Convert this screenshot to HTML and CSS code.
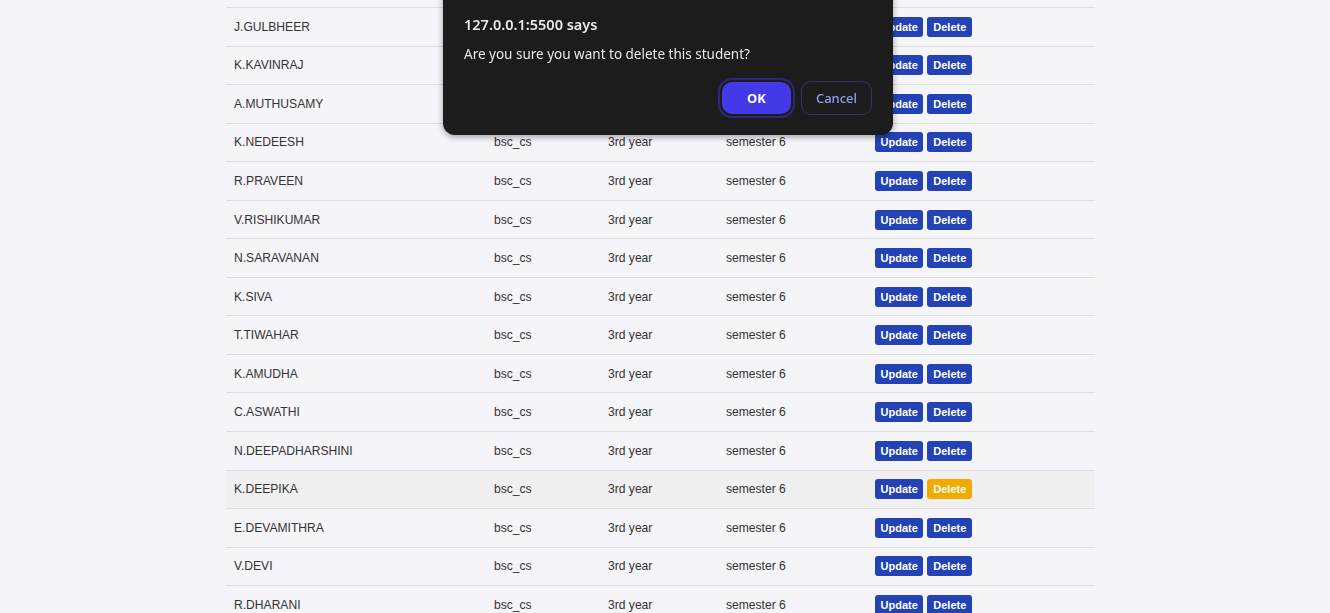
FILE: index.html
```html
<!DOCTYPE html>
<html>
<head>
<meta charset="utf-8">
<link rel="stylesheet" href="styles.css">
</head>
<body>
<div class="wrap">
<table class="students">
<tbody id="rows"></tbody>
</table>
</div>
<div class="dialog">
  <div class="dlg-title">127.0.0.1:5500 says</div>
  <div class="dlg-msg">Are you sure you want to delete this student?</div>
  <div class="dlg-actions">
    <button class="btn-ok">OK</button>
    <button class="btn-cancel">Cancel</button>
  </div>
</div>
<script>
const names=["J.GULBHEER","K.KAVINRAJ","A.MUTHUSAMY","K.NEDEESH","R.PRAVEEN","V.RISHIKUMAR","N.SARAVANAN","K.SIVA","T.TIWAHAR","K.AMUDHA","C.ASWATHI","N.DEEPADHARSHINI","K.DEEPIKA","E.DEVAMITHRA","V.DEVI","R.DHARANI"];
const tb=document.getElementById('rows');
names.forEach((n,i)=>{
  const tr=document.createElement('tr');
  if(n==="K.DEEPIKA") tr.className='hover';
  tr.innerHTML=`<td class="c1">${n}</td><td class="c2">bsc_cs</td><td class="c3">3rd year</td><td class="c4">semester 6</td><td class="c5"><button class="act">Update</button><button class="act del">Delete</button></td>`;
  tb.appendChild(tr);
});
</script>
</body>
</html>
```
FILE: styles.css
```css
html, body {
  margin: 0;
  padding: 0;
  background: #f4f4f9;
  height: 613px;
  overflow: hidden;
}
.wrap {
  padding-top: 7px;
  display: flex;
  justify-content: flex-start;
  padding-left: 226px;
}
.students {
  width: 869px;
  border-collapse: collapse;
  font-family: "Liberation Sans", Arial, sans-serif;
  font-size: 12.1px;
  color: #333;
}
.students tr {
  border-bottom: 1px solid #dddddd;
}
.students tr:first-child {
  border-top: 1px solid #dddddd;
}
.students tr.hover {
  background: #f0f0f0;
}
.students td {
  height: 38.55px;
  padding: 0 0 0 8px;
  box-sizing: border-box;
  vertical-align: middle;
}
.c1 { width: 260px; }
.c2 { width: 114px; }
.c3 { width: 118px; }
.c4 { width: 149px; }
.c5 { width: 228px; }
.act {
  font-family: "Liberation Sans", Arial, sans-serif;
  font-size: 11px;
  font-weight: bold;
  color: #fff;
  background: #2342b5;
  border: none;
  border-radius: 3px;
  height: 20px;
  padding: 0 5.5px;
  margin-right: 4px;
}
.act.del { padding: 0 6px; }
.hover .act.del { background: #f2a900; }
.dialog {
  position: fixed;
  left: 443px;
  top: -14px;
  width: 450px;
  height: 149px;
  box-sizing: border-box;
  background: #1c1c1c;
  border-radius: 12px;
  box-shadow: 0 2px 6px rgba(0,0,0,0.35);
  padding: 28px 21px 0 21px;
  font-family: "Noto Sans", "Open Sans", sans-serif;
  color: #e8e8e8;
}
.dlg-title {
  font-size: 14.5px;
  font-weight: 600;
  line-height: 20px;
}
.dlg-msg {
  font-size: 13.5px;
  line-height: 18px;
  margin-top: 11px;
}
.dlg-actions {
  display: flex;
  justify-content: flex-end;
  align-items: center;
  gap: 6px;
  margin-top: 17px;
}
.btn-ok {
  font-family: "Noto Sans", "Open Sans", sans-serif;
  font-size: 13px;
  font-weight: bold;
  color: #fff;
  background: #4439e9;
  border: 2px solid #1c1c1c;
  outline: 2px solid #2c2a78;
  border-radius: 12px;
  width: 73px;
  height: 36px;
}
.btn-cancel {
  font-family: "Noto Sans", "Open Sans", sans-serif;
  font-size: 13px;
  font-weight: 500;
  color: #949cf5;
  background: transparent;
  border: 1px solid #33365f;
  border-radius: 10px;
  width: 71px;
  height: 34px;
  margin-left: 2px;
}
```
